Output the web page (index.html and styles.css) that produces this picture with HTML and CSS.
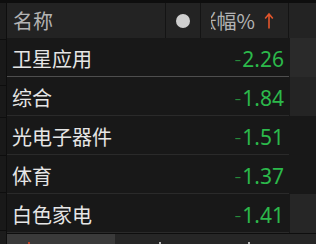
FILE: index.html
```html
<!DOCTYPE html>
<html lang="zh-CN">
<head>
<meta charset="utf-8">
<link rel="stylesheet" href="styles.css">
</head>
<body>
<div class="app">
  <div class="strip">
    <div class="seg s1"></div>
    <div class="seg s2"></div>
    <div class="seg s3"></div>
    <div class="seg s4"></div>
    <div class="seg s5"></div>
    <div class="seg s6"></div>
  </div>
  <div class="main">
    <div class="head">
      <div class="cell name">名称</div>
      <div class="cell dotcell"><span class="dot"></span></div>
      <div class="cell chg">
        <span class="lbl"><span>涨幅%</span></span>
        <svg class="arrow" width="10" height="17" viewBox="0 0 10 17"><path d="M5 2.5V16.5M1.2 6.5L5 2L8.8 6.5" fill="none" stroke="#e2552c" stroke-width="1.6" stroke-linejoin="miter"/></svg>
      </div>
      <div class="cell extra"></div>
    </div>
    <div class="row first">
      <div class="name">卫星应用</div><div class="mid"></div><div class="val"><span class="neg">-</span>2.26</div><div class="extra e1"></div>
    </div>
    <div class="row">
      <div class="name">综合</div><div class="mid"></div><div class="val"><span class="neg">-</span>1.84</div><div class="extra e2"></div>
    </div>
    <div class="row">
      <div class="name">光电子器件</div><div class="mid"></div><div class="val"><span class="neg">-</span>1.51</div><div class="extra e3"></div>
    </div>
    <div class="row">
      <div class="name">体育</div><div class="mid"></div><div class="val"><span class="neg">-</span>1.37</div><div class="extra e4"></div>
    </div>
    <div class="row">
      <div class="name">白色家电</div><div class="mid"></div><div class="val"><span class="neg">-</span>1.41</div><div class="extra e5"></div>
    </div>
    <div class="foot">
      <div class="tab active"><span class="mark red"></span></div>
      <div class="tab"><span class="mark m2"></span><span class="mark m3"></span></div>
    </div>
  </div>
</div>
</body>
</html>
```

FILE: styles.css
```css
html, body {
  margin: 0;
  padding: 0;
}
body {
  background: #0e0e0e;
  width: 316px;
  height: 244px;
  overflow: hidden;
  font-family: "Noto Sans CJK SC", "Noto Sans", sans-serif;
}
.app {
  display: flex;
  height: 244px;
  padding-top: 3px;
  box-sizing: border-box;
}
.strip {
  width: 6px;
  margin-right: 1px;
  display: flex;
  flex-direction: column;
  background: #1c1c1c;
}
.seg {
  border-bottom: 1px solid #0e0e0e;
  background: #1c1c1c;
}
.s1 { height: 36px; }
.s2 { height: 45px; background: #191919; }
.s3 { height: 31px; background: #191919; }
.s4 { height: 37px; background: #191919; }
.s5 { height: 36px; background: #191919; }
.s6 { height: 37px; background: #191919; }
.main {
  flex: 1;
  display: flex;
  flex-direction: column;
  min-width: 0;
}
.head {
  display: grid;
  grid-template-columns: 159px 35px 88px 1fr;
  height: 35px;
  background: #232323;
  color: #b3b3b3;
  font-size: 20px;
}
.head .cell {
  display: flex;
  align-items: center;
  border-right: 1px solid #141414;
  line-height: 1;
}
.head .extra {
  border-right: none;
}
.head .name {
  padding-left: 6px;
  padding-top: 1px;
}
.dotcell {
  justify-content: center;
}
.dot {
  width: 14px;
  height: 14px;
  border-radius: 50%;
  background: #cfcfcf;
}
.chg {
  justify-content: flex-end;
  padding-right: 14px;
}
.lbl {
  display: flex;
  justify-content: flex-end;
  width: 44px;
  overflow: hidden;
  white-space: nowrap;
  margin-right: 9px;
  padding-top: 1px;
}
.arrow {
  flex: none;
  display: block;
}
.row {
  display: grid;
  grid-template-columns: 159px 35px 88px 1fr;
  height: 39px;
  background: #181818;
}
.row > .name,
.row > .mid,
.row > .val {
  border-bottom: 1px solid #2a2a2a;
}
.row.first > .name,
.row.first > .mid,
.row.first > .val {
  border-bottom-color: #4e4e4e;
}
.row .name {
  display: flex;
  align-items: center;
  padding-left: 5px;
  padding-top: 4px;
  font-size: 20px;
  color: #e6e6e6;
  line-height: 1;
}
.row .val {
  display: flex;
  align-items: center;
  justify-content: flex-end;
  padding-right: 5px;
  padding-top: 4px;
  font-family: "Noto Sans", sans-serif;
  font-size: 21px;
  color: #2cb94b;
  line-height: 1;
}
.neg {
  opacity: 0.7;
  transform: scaleY(0.7);
  margin-right: 1px;
}
.row .extra {
  border-left: 1px solid #181818;
}
.e1 { background: #2a2a2a; }
.e2 { background: #242424; }
.e3 { background: #181818; }
.e4 { background: #181818; }
.e5 { background: #262626; }
.foot {
  flex: 1;
  display: flex;
  border-top: 1px solid #0e0e0e;
  background: #262626;
}
.tab {
  position: relative;
  flex: 1;
}
.tab.active {
  flex: none;
  width: 108px;
  background: #3a3a3a;
}
.mark {
  position: absolute;
  bottom: 0;
  width: 2px;
  height: 2px;
  background: #b8b8b8;
}
.mark.red {
  left: 21px;
  background: #c0452a;
}
.m2 { left: 44px; }
.m3 { left: 133px; }
```
